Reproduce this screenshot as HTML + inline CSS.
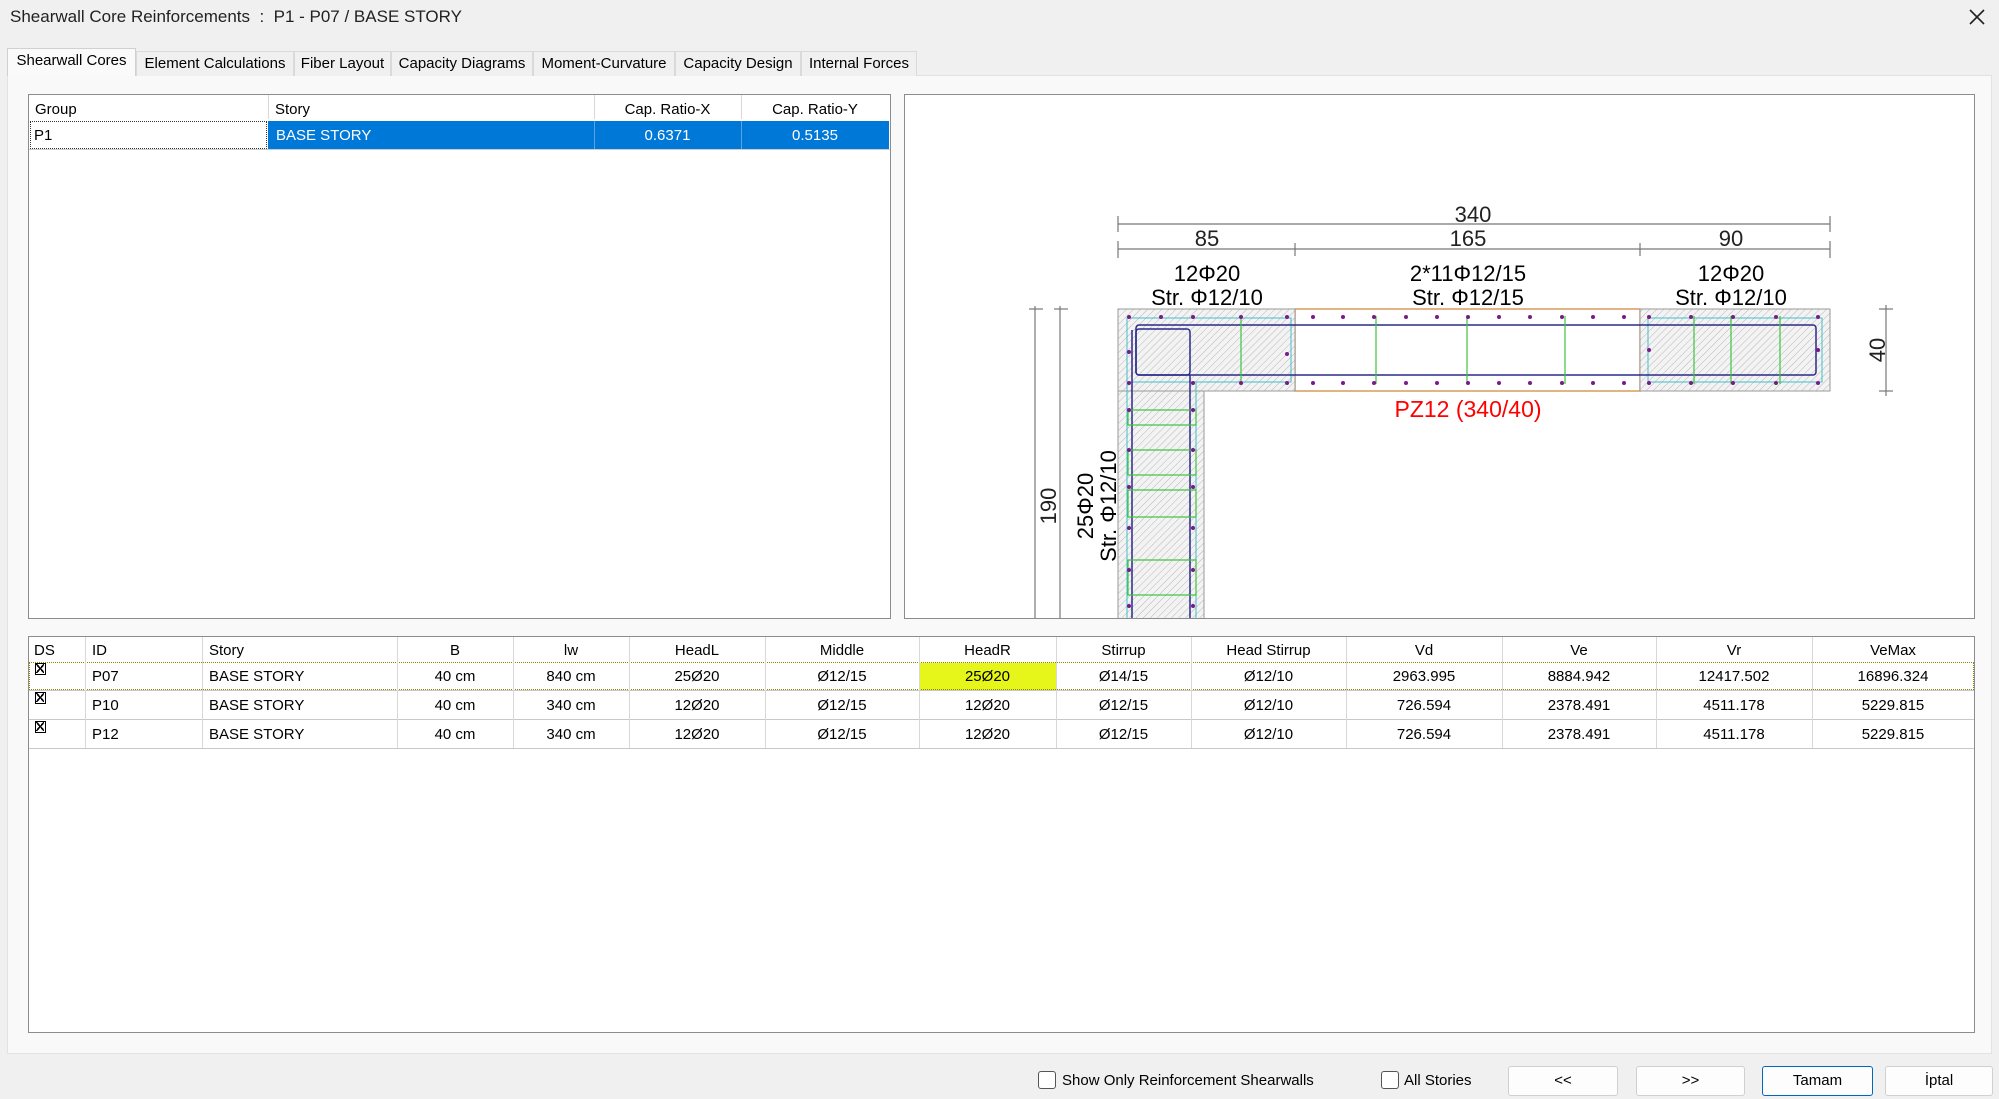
<!DOCTYPE html>
<html><head><meta charset="utf-8"><style>
*{box-sizing:border-box;margin:0;padding:0}
body{width:1999px;height:1099px;background:#f0f0f0;font-family:"Liberation Sans",sans-serif;color:#000;position:relative;overflow:hidden;font-size:15px}
.a{position:absolute}
.title{left:10px;top:7px;font-size:17px;color:#222}
.tab{position:absolute;top:51px;height:25px;border:1px solid #dadada;border-bottom:none;background:#f0f0f0;font-size:15px;line-height:24px;text-align:center;white-space:nowrap}
.tab.sel{background:#fafafa;top:48px;height:28px;border-color:#d0d0d0}
.content{left:7px;top:75px;width:1985px;height:979px;background:#f9f9f9;border:1px solid #e2e2e2}
.grid{background:#fff;border:1px solid #8c8c8c}
.c{position:absolute;white-space:nowrap;line-height:28px;height:28px;overflow:hidden}
.h{line-height:23px;height:23px}
.vl{position:absolute;width:1px;background:#d8d8d8}
.hl{position:absolute;height:1px;background:#c8c8c8}
.btn{position:absolute;top:1066px;height:30px;background:#fdfdfd;border:1px solid #d0d0d0;border-radius:3px;text-align:center;line-height:28px;font-size:15px}
.cb{position:absolute;top:1071px;width:18px;height:18px;border:1px solid #555;border-radius:3px;background:#fff}
.ds{position:absolute;left:35px;width:11px;height:12px;border:1.5px solid #000;background:#fff}
.ds:before{content:"";position:absolute;left:0;top:0;width:8px;height:9px;background:linear-gradient(to top right,transparent 45%,#000 45%,#000 58%,transparent 58%),linear-gradient(to bottom right,transparent 45%,#000 45%,#000 58%,transparent 58%)}
</style></head><body>
<div class="a title">Shearwall Core Reinforcements&nbsp; :&nbsp; P1 - P07 / BASE STORY</div>
<svg class="a" style="left:1968px;top:8px" width="18" height="18" viewBox="0 0 18 18"><path d="M2 2L16 16M16 2L2 16" stroke="#222" stroke-width="1.6"/></svg>
<div class="a content"></div>
<div class="tab sel" style="left:7px;width:129px">Shearwall Cores</div>
<div class="tab" style="left:136px;width:158px">Element Calculations</div>
<div class="tab" style="left:294px;width:97px">Fiber Layout</div>
<div class="tab" style="left:391px;width:142px">Capacity Diagrams</div>
<div class="tab" style="left:533px;width:142px">Moment-Curvature</div>
<div class="tab" style="left:675px;width:126px">Capacity Design</div>
<div class="tab" style="left:801px;width:116px">Internal Forces</div>

<div class="a grid" style="left:28px;top:94px;width:863px;height:525px"></div>
<div class="c h" style="left:35px;top:98px">Group</div>
<div class="c h" style="left:275px;top:98px">Story</div>
<div class="c h" style="left:594px;top:98px;width:147px;text-align:center">Cap. Ratio-X</div>
<div class="c h" style="left:741px;top:98px;width:148px;text-align:center">Cap. Ratio-Y</div>
<div class="vl" style="left:268px;top:95px;height:24px"></div>
<div class="vl" style="left:594px;top:95px;height:24px"></div>
<div class="vl" style="left:741px;top:95px;height:24px"></div>
<div class="a" style="left:30px;top:121px;width:237px;height:28px;background:#fff;border:1px dotted #333"></div>
<div class="a" style="left:268px;top:121px;width:621px;height:28px;background:#0078d7"></div>
<div class="vl" style="left:594px;top:121px;height:28px;background:#5aa3e3"></div>
<div class="vl" style="left:741px;top:121px;height:28px;background:#5aa3e3"></div>
<div class="c" style="left:34px;top:122px">P1</div>
<div class="c" style="left:276px;top:122px;color:#fff">BASE STORY</div>
<div class="c" style="left:594px;top:122px;width:147px;text-align:center;color:#fff">0.6371</div>
<div class="c" style="left:741px;top:122px;width:148px;text-align:center;color:#fff">0.5135</div>
<div class="hl" style="left:29px;top:149px;width:861px;background:#ccc"></div>

<div class="a" style="left:904px;top:94px;width:1071px;height:525px;background:#fff;border:1px solid #8c8c8c;overflow:hidden">
<svg width="1071" height="525" viewBox="905 95 1071 525" style="display:block">
<defs>
<pattern id="hat" width="5" height="5" patternUnits="userSpaceOnUse" patternTransform="rotate(45)"><rect width="5" height="5" fill="#f3f3f3"/><line x1="0" y1="0" x2="0" y2="5" stroke="#b8b8b8" stroke-width="1"/></pattern>
</defs>
<g stroke="#777" stroke-width="1.2" fill="none">
<line x1="1118" y1="224" x2="1830" y2="224"/>
<line x1="1118" y1="216" x2="1118" y2="232"/><line x1="1830" y1="216" x2="1830" y2="232"/>
<line x1="1118" y1="249" x2="1830" y2="249"/>
<line x1="1118" y1="241" x2="1118" y2="258"/><line x1="1295" y1="243" x2="1295" y2="256"/><line x1="1640" y1="243" x2="1640" y2="256"/><line x1="1830" y1="241" x2="1830" y2="258"/>
<line x1="1886" y1="305" x2="1886" y2="396"/><line x1="1879" y1="309" x2="1893" y2="309"/><line x1="1879" y1="391" x2="1893" y2="391"/>
<line x1="1035" y1="306" x2="1035" y2="620"/><line x1="1060" y1="306" x2="1060" y2="620"/>
<line x1="1029" y1="309" x2="1043" y2="309"/><line x1="1054" y1="309" x2="1068" y2="309"/>
</g>
<g font-family="Liberation Sans,sans-serif" font-size="22" fill="#222" text-anchor="middle">
<text x="1473" y="222">340</text>
<text x="1207" y="246">85</text><text x="1468" y="246">165</text><text x="1731" y="246">90</text>
<g fill="#000"><text x="1207" y="281">12Φ20</text><text x="1207" y="305">Str. Φ12/10</text>
<text x="1468" y="281">2*11Φ12/15</text><text x="1468" y="305">Str. Φ12/15</text>
<text x="1731" y="281">12Φ20</text><text x="1731" y="305">Str. Φ12/10</text></g>
<text x="1468" y="417" fill="#f00" font-size="23">PZ12 (340/40)</text>
<text transform="translate(1885,350) rotate(-90)">40</text>
<text transform="translate(1056,506) rotate(-90)">190</text>
<text transform="translate(1093,506) rotate(-90)" fill="#000">25Φ20</text>
<text transform="translate(1116,506) rotate(-90)" fill="#000">Str. Φ12/10</text>
</g>
<rect x="1295" y="309" width="345" height="82" fill="#fff" stroke="#d89a5a" stroke-width="1.5"/>
<rect x="1118" y="309" width="177" height="82" fill="url(#hat)" stroke="#999"/>
<rect x="1640" y="309" width="190" height="82" fill="url(#hat)" stroke="#999"/>
<rect x="1118" y="391" width="86" height="240" fill="url(#hat)" stroke="#999"/>
<g fill="none" stroke="#40c0c8" stroke-width="1">
<rect x="1127" y="318" width="164" height="64"/><rect x="1648" y="318" width="174" height="64"/>
<line x1="1127" y1="382" x2="1127" y2="620"/><line x1="1196" y1="382" x2="1196" y2="620"/>
</g>
<g fill="none" stroke="#2b2b8a" stroke-width="1.5">
<rect x="1136" y="325" width="680" height="50" rx="3"/>
<rect x="1136" y="329" width="54" height="46" rx="3"/>
<line x1="1132" y1="330" x2="1132" y2="620"/><line x1="1190" y1="375" x2="1190" y2="620"/>
</g>
<g fill="none" stroke="#3cc43c" stroke-width="1.2">
<line x1="1241" y1="316" x2="1241" y2="384"/><line x1="1376" y1="316" x2="1376" y2="384"/><line x1="1467" y1="316" x2="1467" y2="384"/><line x1="1565" y1="316" x2="1565" y2="384"/>
<line x1="1694" y1="316" x2="1694" y2="384"/><line x1="1731" y1="316" x2="1731" y2="384"/><line x1="1780" y1="316" x2="1780" y2="384"/>
<rect x="1128" y="410" width="68" height="15"/><rect x="1128" y="450" width="68" height="25"/><rect x="1128" y="490" width="68" height="27"/><rect x="1128" y="560" width="68" height="35"/>
</g>
<g fill="#7a1a8a">
<circle cx="1129" cy="317" r="2"/><circle cx="1161" cy="317" r="2"/><circle cx="1193" cy="317" r="2"/><circle cx="1241" cy="317" r="2"/><circle cx="1287" cy="317" r="2"/>
<circle cx="1129" cy="383" r="2"/><circle cx="1193" cy="383" r="2"/><circle cx="1241" cy="383" r="2"/><circle cx="1287" cy="383" r="2"/>
<circle cx="1129" cy="352" r="2"/><circle cx="1287" cy="354" r="2"/>
<circle cx="1313" cy="317" r="2"/><circle cx="1343" cy="317" r="2"/><circle cx="1374" cy="317" r="2"/><circle cx="1406" cy="317" r="2"/><circle cx="1437" cy="317" r="2"/><circle cx="1468" cy="317" r="2"/><circle cx="1499" cy="317" r="2"/><circle cx="1530" cy="317" r="2"/><circle cx="1562" cy="317" r="2"/><circle cx="1593" cy="317" r="2"/><circle cx="1624" cy="317" r="2"/>
<circle cx="1313" cy="383" r="2"/><circle cx="1343" cy="383" r="2"/><circle cx="1374" cy="383" r="2"/><circle cx="1406" cy="383" r="2"/><circle cx="1437" cy="383" r="2"/><circle cx="1468" cy="383" r="2"/><circle cx="1499" cy="383" r="2"/><circle cx="1530" cy="383" r="2"/><circle cx="1562" cy="383" r="2"/><circle cx="1593" cy="383" r="2"/><circle cx="1624" cy="383" r="2"/>
<circle cx="1649" cy="317" r="2"/><circle cx="1691" cy="317" r="2"/><circle cx="1733" cy="317" r="2"/><circle cx="1776" cy="317" r="2"/><circle cx="1818" cy="317" r="2"/>
<circle cx="1649" cy="383" r="2"/><circle cx="1691" cy="383" r="2"/><circle cx="1733" cy="383" r="2"/><circle cx="1776" cy="383" r="2"/><circle cx="1818" cy="383" r="2"/>
<circle cx="1649" cy="350" r="2"/><circle cx="1818" cy="350" r="2"/>
<circle cx="1129" cy="410" r="2"/><circle cx="1193" cy="410" r="2"/><circle cx="1129" cy="450" r="2"/><circle cx="1193" cy="450" r="2"/><circle cx="1129" cy="487" r="2"/><circle cx="1193" cy="487" r="2"/><circle cx="1129" cy="528" r="2"/><circle cx="1193" cy="528" r="2"/><circle cx="1129" cy="570" r="2"/><circle cx="1193" cy="570" r="2"/><circle cx="1129" cy="606" r="2"/><circle cx="1193" cy="606" r="2"/>
</g>
</svg></div>

<div class="a grid" style="left:28px;top:636px;width:1947px;height:397px"></div>
<div style="position:absolute;left:0;top:1px;font-size:15px">
<div class="c h" style="left:34px;top:638px">DS</div>
<div class="c h" style="left:92px;top:638px">ID</div>
<div class="c h" style="left:209px;top:638px">Story</div>
<div class="c h" style="left:397px;top:638px;width:116px;text-align:center">B</div>
<div class="c h" style="left:513px;top:638px;width:116px;text-align:center">lw</div>
<div class="c h" style="left:629px;top:638px;width:136px;text-align:center">HeadL</div>
<div class="c h" style="left:765px;top:638px;width:154px;text-align:center">Middle</div>
<div class="c h" style="left:919px;top:638px;width:137px;text-align:center">HeadR</div>
<div class="c h" style="left:1056px;top:638px;width:135px;text-align:center">Stirrup</div>
<div class="c h" style="left:1191px;top:638px;width:155px;text-align:center">Head Stirrup</div>
<div class="c h" style="left:1346px;top:638px;width:156px;text-align:center">Vd</div>
<div class="c h" style="left:1502px;top:638px;width:154px;text-align:center">Ve</div>
<div class="c h" style="left:1656px;top:638px;width:156px;text-align:center">Vr</div>
<div class="c h" style="left:1812px;top:638px;width:162px;text-align:center">VeMax</div>
</div>
<div class="a" style="left:919px;top:663px;width:137px;height:27px;background:#e6f51a"></div>
<div class="a" style="left:29px;top:662px;width:1945px;height:28px;border:1px dotted #8a8a00"></div>
<div class="hl" style="left:29px;top:690px;width:1945px"></div>
<div class="hl" style="left:29px;top:719px;width:1945px"></div>
<div class="hl" style="left:29px;top:748px;width:1945px"></div>
<div class="vl" style="left:85px;top:637px;height:111px"></div><div class="vl" style="left:202px;top:637px;height:111px"></div><div class="vl" style="left:397px;top:637px;height:111px"></div><div class="vl" style="left:513px;top:637px;height:111px"></div><div class="vl" style="left:629px;top:637px;height:111px"></div><div class="vl" style="left:765px;top:637px;height:111px"></div><div class="vl" style="left:919px;top:637px;height:111px"></div><div class="vl" style="left:1056px;top:637px;height:111px"></div><div class="vl" style="left:1191px;top:637px;height:111px"></div><div class="vl" style="left:1346px;top:637px;height:111px"></div><div class="vl" style="left:1502px;top:637px;height:111px"></div><div class="vl" style="left:1656px;top:637px;height:111px"></div><div class="vl" style="left:1812px;top:637px;height:111px"></div>

<div class="ds" style="top:663px"></div>
<div class="ds" style="top:692px"></div>
<div class="ds" style="top:721px"></div>

<div style="position:absolute;left:0;top:663px">
<div class="c" style="left:92px;top:0">P07</div><div class="c" style="left:209px;top:0">BASE STORY</div>
<div class="c" style="left:397px;width:116px;text-align:center">40 cm</div><div class="c" style="left:513px;width:116px;text-align:center">840 cm</div>
<div class="c" style="left:629px;width:136px;text-align:center">25Ø20</div><div class="c" style="left:765px;width:154px;text-align:center">Ø12/15</div>
<div class="c" style="left:919px;width:137px;text-align:center">25Ø20</div><div class="c" style="left:1056px;width:135px;text-align:center">Ø14/15</div>
<div class="c" style="left:1191px;width:155px;text-align:center">Ø12/10</div><div class="c" style="left:1346px;width:156px;text-align:center">2963.995</div>
<div class="c" style="left:1502px;width:154px;text-align:center">8884.942</div><div class="c" style="left:1656px;width:156px;text-align:center">12417.502</div>
<div class="c" style="left:1812px;width:162px;text-align:center">16896.324</div>
</div>
<div style="position:absolute;left:0;top:692px">
<div class="c" style="left:92px;top:0">P10</div><div class="c" style="left:209px;top:0">BASE STORY</div>
<div class="c" style="left:397px;width:116px;text-align:center">40 cm</div><div class="c" style="left:513px;width:116px;text-align:center">340 cm</div>
<div class="c" style="left:629px;width:136px;text-align:center">12Ø20</div><div class="c" style="left:765px;width:154px;text-align:center">Ø12/15</div>
<div class="c" style="left:919px;width:137px;text-align:center">12Ø20</div><div class="c" style="left:1056px;width:135px;text-align:center">Ø12/15</div>
<div class="c" style="left:1191px;width:155px;text-align:center">Ø12/10</div><div class="c" style="left:1346px;width:156px;text-align:center">726.594</div>
<div class="c" style="left:1502px;width:154px;text-align:center">2378.491</div><div class="c" style="left:1656px;width:156px;text-align:center">4511.178</div>
<div class="c" style="left:1812px;width:162px;text-align:center">5229.815</div>
</div>
<div style="position:absolute;left:0;top:721px">
<div class="c" style="left:92px;top:0">P12</div><div class="c" style="left:209px;top:0">BASE STORY</div>
<div class="c" style="left:397px;width:116px;text-align:center">40 cm</div><div class="c" style="left:513px;width:116px;text-align:center">340 cm</div>
<div class="c" style="left:629px;width:136px;text-align:center">12Ø20</div><div class="c" style="left:765px;width:154px;text-align:center">Ø12/15</div>
<div class="c" style="left:919px;width:137px;text-align:center">12Ø20</div><div class="c" style="left:1056px;width:135px;text-align:center">Ø12/15</div>
<div class="c" style="left:1191px;width:155px;text-align:center">Ø12/10</div><div class="c" style="left:1346px;width:156px;text-align:center">726.594</div>
<div class="c" style="left:1502px;width:154px;text-align:center">2378.491</div><div class="c" style="left:1656px;width:156px;text-align:center">4511.178</div>
<div class="c" style="left:1812px;width:162px;text-align:center">5229.815</div>
</div>

<div class="cb" style="left:1038px"></div>
<div class="a" style="left:1062px;top:1072px;font-size:15px">Show Only Reinforcement Shearwalls</div>
<div class="cb" style="left:1381px"></div>
<div class="a" style="left:1404px;top:1072px;font-size:15px">All Stories</div>
<div class="btn" style="left:1508px;width:110px">&lt;&lt;</div>
<div class="btn" style="left:1636px;width:109px">&gt;&gt;</div>
<div class="btn" style="left:1762px;width:111px;border:1.5px solid #0067c0">Tamam</div>
<div class="btn" style="left:1885px;width:108px">İptal</div>
</body></html>
